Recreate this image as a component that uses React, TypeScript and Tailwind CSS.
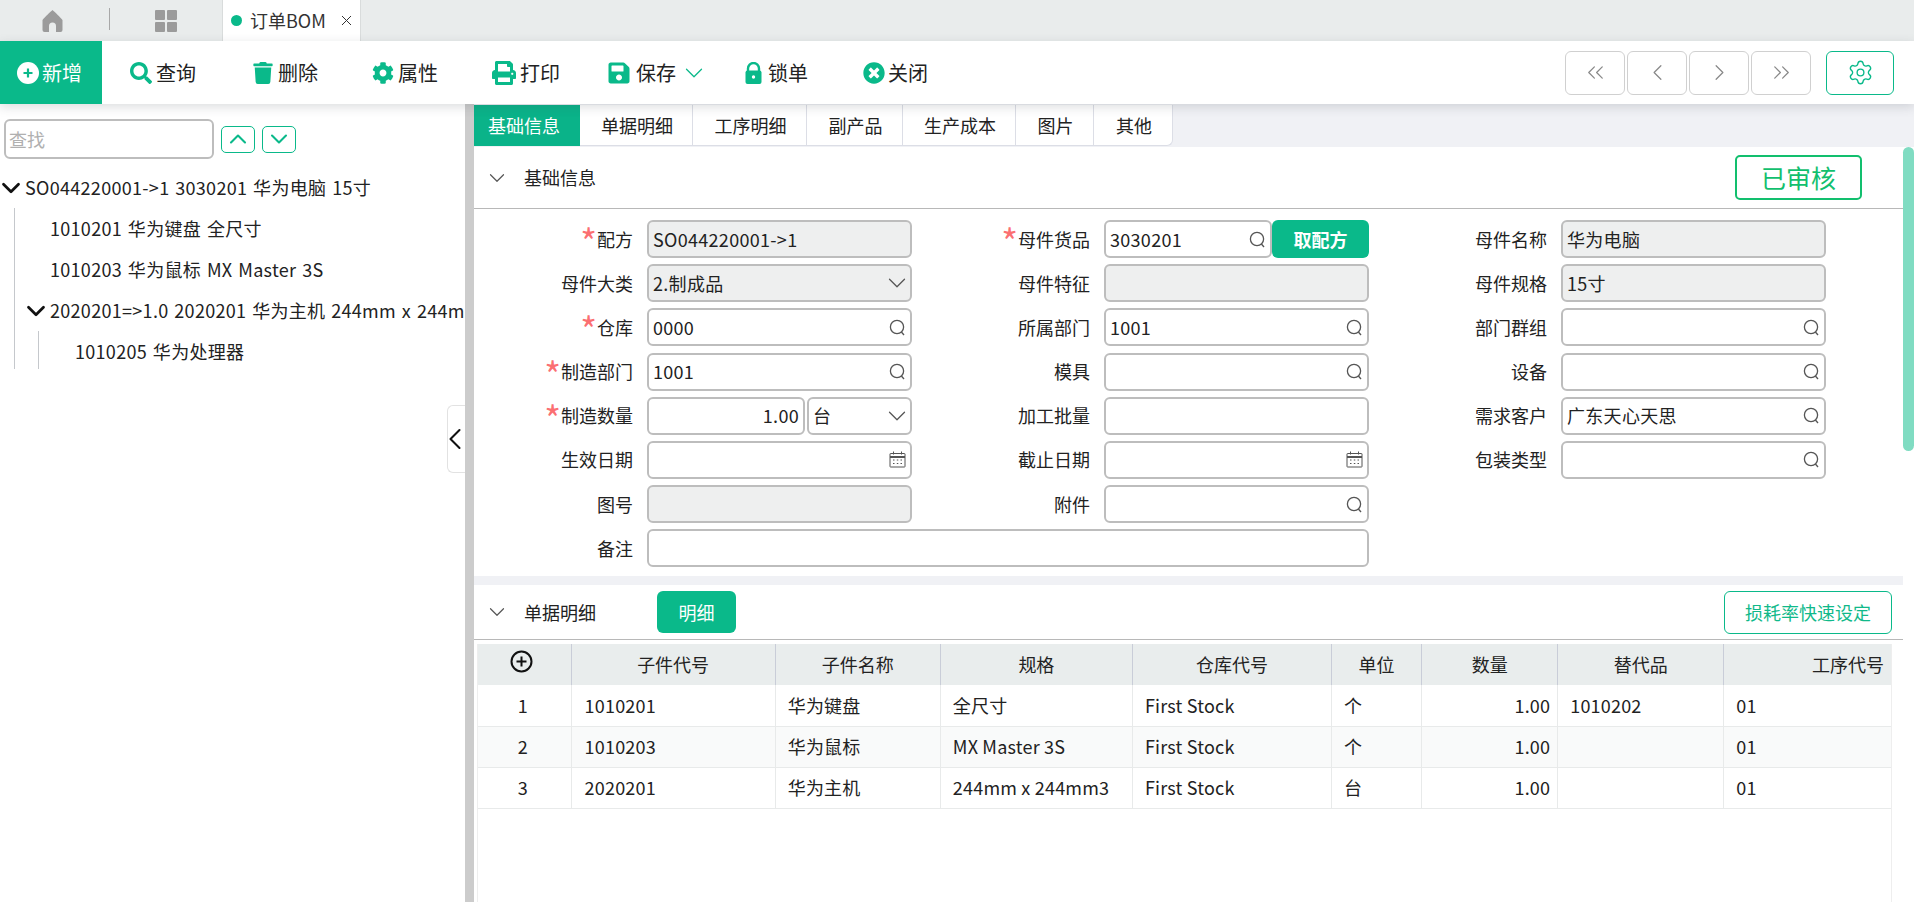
import { ChevronDown, ChevronLeft, ChevronRight, ChevronUp, ChevronsLeft, ChevronsRight, Settings } from "lucide-react";
import type { ReactNode } from "react";
import { FaCog, FaPrint, FaSave, FaSearch, FaTimesCircle, FaTrash } from "react-icons/fa";

const SearchGlyph = () => (
  <svg width="17" height="17" viewBox="0 0 17 17" fill="none" stroke="#555" strokeWidth="1.3" className="shrink-0">
    <circle cx="8" cy="8" r="6.6" />
    <path d="M12.4 13l2.6 3" />
  </svg>
);

const CalendarGlyph = () => (
  <svg width="17" height="17" viewBox="0 0 17 17" fill="none" stroke="#555" className="shrink-0">
    <rect x="1" y="2.5" width="15" height="13.5" rx="0.5" />
    <path d="M1 6h15" strokeWidth="2" />
    <path d="M4.5 0.5v3M12.5 0.5v3" />
    <path d="M4 9h1.5M7.8 9h1.5M11.5 9h1.5M4 12.5h1.5M7.8 12.5h1.5M11.5 12.5h1.5" />
  </svg>
);

const LockGlyph = () => (
  <svg width="17" height="22" viewBox="0 0 17 22" className="shrink-0">
    <path d="M3 9V6.5a5.5 5.500 0 0 1 11 0V9" fill="none" stroke="#0ab98a" strokeWidth="2.4" />
    <rect x="0.5" y="8.5" width="16" height="13.5" rx="2" fill="#0ab98a" />
    <circle cx="8.5" cy="15" r="1.7" fill="#fff" />
  </svg>
);

const toolItems: { label: string; icon: ReactNode; className: string }[] = [
  { label: "查询", icon: <FaSearch size={22} color="#0ab98a" />, className: "w-[122px] pl-[28px]" },
  { label: "删除", icon: <FaTrash size={22} color="#0ab98a" />, className: "w-[120px] pl-[28px]" },
  { label: "属性", icon: <FaCog size={22} color="#0ab98a" />, className: "w-[120px] pl-[28px]" },
  { label: "打印", icon: <FaPrint size={24} color="#0ab98a" />, className: "w-[143px] pl-[28px]" },
];

function ToolItem({ label, icon, className }: { label: string; icon: ReactNode; className: string }) {
  return (
    <div className={`flex h-full items-center gap-[4px] text-[20px] text-[#222] ${className}`}>
      {icon}
      <span>{label}</span>
    </div>
  );
}

function Input({
  value,
  icon,
  disabled,
  right,
  className = "w-[265px]",
}: {
  value?: string;
  icon?: ReactNode;
  disabled?: boolean;
  right?: boolean;
  className?: string;
}) {
  return (
    <div
      className={`flex h-[38px] items-center justify-between rounded-[6px] border-2 border-[#bdbdbd] px-[4px] text-[18px] tracking-[0.3px] text-[#222] ${
        disabled ? "bg-[#eeefef]" : "bg-white"
      } ${className}`}
    >
      <span className={right ? "flex-1 text-right" : ""}>{value}</span>
      {icon}
    </div>
  );
}

function Field({
  label,
  required,
  first,
  children,
}: {
  label: string;
  required?: boolean;
  first?: boolean;
  children: ReactNode;
}) {
  return (
    <div className="flex items-center">
      <div className={`flex h-[38px] shrink-0 items-center justify-end text-[18px] text-[#222] ${first ? "mr-[14px] w-[159px]" : "mr-[14px] w-[178px]"}`}>
        {required && <span className="h-[24px] text-[36px] leading-[26px] text-[#fb6f72]">*</span>}
        <span>{label}</span>
      </div>
      {children}
    </div>
  );
}

const search = <SearchGlyph />;
const calendar = <CalendarGlyph />;
const chevron = <ChevronDown size={30} color="#555" strokeWidth={1} className="-my-[4px] -mr-[6px] shrink-0" />;

const columns = [
  { title: "", width: "w-[93px]" },
  { title: "子件代号", width: "w-[204px]" },
  { title: "子件名称", width: "w-[165px]" },
  { title: "规格", width: "w-[192px]" },
  { title: "仓库代号", width: "w-[199px]" },
  { title: "单位", width: "w-[90px]" },
  { title: "数量", width: "w-[136px]" },
  { title: "替代品", width: "w-[166px]" },
  { title: "工序代号", width: "w-[167px]" },
];

const rows = [
  ["1", "1010201", "华为键盘", "全尺寸", "First Stock", "个", "1.00", "1010202", "01"],
  ["2", "1010203", "华为鼠标", "MX Master 3S", "First Stock", "个", "1.00", "", "01"],
  ["3", "2020201", "华为主机", "244mm x 244mm3", "First Stock", "台", "1.00", "", "01"],
];

const tabs = [
  { label: "单据明细", width: "w-[113px]" },
  { label: "工序明细", width: "w-[114px]" },
  { label: "副产品", width: "w-[96px]" },
  { label: "生产成本", width: "w-[113px]" },
  { label: "图片", width: "w-[78px]" },
  { label: "其他", width: "w-[78px]" },
];

export default function App() {
  return (
    <div className="flex h-[902px] w-[1914px] flex-col overflow-hidden bg-white font-['Noto_Sans_CJK_SC','Noto_Sans',sans-serif]">
      {/* top tabs */}
      <div className="flex h-[41px] shrink-0 bg-[#e9ecec]">
        <div className="flex w-[109px] items-center justify-end pr-[46px]">
          <svg width="21" height="22" viewBox="0 0 21 22">
            <path
              d="M10.5 0C8 2 3 7 0.5 10v10a2 2 0 0 0 2 2H7v-6a3.5 3.5 0 0 1 7 0v6h4.500a2 2 0 0 0 2-2V10C18 7 13 2 10.500 0z"
              fill="#9b9b9b"
            />
          </svg>
        </div>
        <div className="mt-[8px] h-[22px] w-px bg-[#a8a8a8]" />
        <div className="flex w-[112px] items-center pl-[45px]">
          <svg width="22" height="22" viewBox="0 0 22 22" fill="#9b9b9b">
            <rect width="10" height="10" rx="1" />
            <rect x="12" width="10" height="10" rx="1" />
            <rect y="12" width="10" height="10" rx="1" />
            <rect x="12" y="12" width="10" height="10" rx="1" />
          </svg>
        </div>
        <div className="flex w-[139px] items-center border-x border-[#d9dcdc] bg-white pl-[8px]">
          <span className="h-[11px] w-[11px] rounded-full bg-[#0ab98a]" />
          <span className="ml-[8px] text-[18px] text-[#333]">订单BOM</span>
          <svg width="11" height="11" viewBox="0 0 11 11" stroke="#333" className="ml-[15px]">
            <path d="M1 1l9 9M10 1l-9 9" />
          </svg>
        </div>
      </div>

      {/* toolbar */}
      <div className="relative z-10 flex h-[63px] shrink-0 items-center bg-white shadow-[0_3px_10px_rgba(60,64,80,0.18)]">
        <div className="flex h-full w-[102px] items-center gap-[3px] bg-[#0ab98a] pl-[17px] text-[20px] text-white">
          <svg width="22" height="22" viewBox="0 0 22 22" className="shrink-0">
            <circle cx="11" cy="11" r="11" fill="#fff" />
            <path d="M11 6.500v9M6.500 11h9" stroke="#0ab98a" strokeWidth="2.2" />
          </svg>
          <span>新增</span>
        </div>
        {toolItems.map((item) => (
          <ToolItem key={item.label} {...item} />
        ))}
        <div className="flex h-full w-[138px] items-center gap-[5px] text-[20px] text-[#222]">
          <FaSave size={24} color="#0ab98a" />
          <span>保存</span>
          <ChevronDown size={30} color="#0ab98a" strokeWidth={1} className="-ml-[2px]" />
        </div>
        <div className="flex h-full w-[118px] items-center gap-[6px] text-[20px] text-[#222]">
          <LockGlyph />
          <span>锁单</span>
        </div>
        <div className="flex h-full items-center gap-[3px] text-[20px] text-[#222]">
          <FaTimesCircle size={22} color="#0ab98a" />
          <span>关闭</span>
        </div>
        <div className="ml-auto mr-[20px] flex items-center">
          <div className="flex gap-[2px]">
            {[ChevronsLeft, ChevronLeft, ChevronRight, ChevronsRight].map((Icon, i) => (
              <div key={i} className="flex h-[44px] w-[60px] items-center justify-center rounded-[6px] border border-[#d0d0d0] bg-white">
                <Icon size={27} color="#888" strokeWidth={1.1} />
              </div>
            ))}
          </div>
          <div className="ml-[15px] flex h-[44px] w-[68px] items-center justify-center rounded-[6px] border border-[#0ab98a]">
            <Settings size={27} color="#0ab98a" strokeWidth={1.2} />
          </div>
        </div>
      </div>

      <div className="flex min-h-0 flex-1">
        {/* tree */}
        <div className="relative w-[465px] shrink-0 overflow-hidden bg-white">
          <div className="flex items-center pl-[4px] pt-[15px]">
            <div className="flex h-[40px] w-[210px] items-center rounded-[6px] border-2 border-[#bdbdbd] px-[3px] text-[18px] text-[#b0b0b0]">
              查找
            </div>
            <div className="ml-[7px] flex h-[27px] w-[34px] items-center justify-center rounded-[5px] border border-[#0ab98a]">
              <ChevronUp size={28} color="#0ab98a" strokeWidth={1.8} />
            </div>
            <div className="ml-[7px] flex h-[27px] w-[34px] items-center justify-center rounded-[5px] border border-[#0ab98a]">
              <ChevronDown size={28} color="#0ab98a" strokeWidth={1.8} />
            </div>
          </div>
          <div className="mt-[8px] text-[18px] tracking-[0.3px] text-[#222] [word-spacing:1.5px]">
            <div className="flex h-[41px] items-center whitespace-nowrap">
              <div className="flex w-[21px] shrink-0 justify-center">
                <ChevronDown size={30} color="#111" strokeWidth={2.2} className="shrink-0" />
              </div>
              <span className="ml-[4px]">SO044220001-&gt;1 3030201 华为电脑 15寸</span>
            </div>
            <div className="ml-[14px] border-l border-[#c5c8cc]">
              <div className="flex h-[41px] items-center pl-[35px]">1010201 华为键盘 全尺寸</div>
              <div className="flex h-[41px] items-center pl-[35px]">1010203 华为鼠标 MX Master 3S</div>
              <div className="flex h-[41px] items-center overflow-hidden whitespace-nowrap pl-[10px]">
                <div className="flex w-[21px] shrink-0 justify-center">
                  <ChevronDown size={30} color="#111" strokeWidth={2.2} className="shrink-0" />
                </div>
                <span className="ml-[4px]">2020201=&gt;1.0 2020201 华为主机 244mm x 244mm3</span>
              </div>
              <div className="ml-[23px] flex h-[38px] items-center border-l border-[#c5c8cc] pl-[36px] pt-[2px]">1010205 华为处理器</div>
            </div>
          </div>
          <div className="absolute right-0 top-[301px] flex h-[68px] w-[18px] items-center justify-center rounded-l-[6px] border border-r-0 border-[#e2e2e2] bg-white pr-[3px]">
            <ChevronLeft size={36} color="#111" strokeWidth={1.4} className="shrink-0" />
          </div>
        </div>
        <div className="w-[9px] shrink-0 bg-[#cccccc]" />

        {/* detail */}
        <div className="flex min-w-0 flex-1 flex-col bg-[#f0f1f5]">
          <div className="flex h-[43px] shrink-0 items-start pt-px">
            <div className="flex h-[41px] w-[106px] items-center justify-center bg-[#0ab389] pr-[6px] text-[18px] text-white">基础信息</div>
            <div className="flex h-[41px] rounded-br-[6px] border-b border-r border-[#dcdee6] bg-white text-[18px] text-[#222]">
              {tabs.map((tab) => (
                <div key={tab.label} className={`flex items-center justify-center border-r border-[#dcdee6] pl-[2px] last:border-r-0 ${tab.width}`}>
                  {tab.label}
                </div>
              ))}
            </div>
          </div>
          <div className="flex min-h-0 flex-1">
            <div className="flex min-w-0 flex-1 flex-col">
              <section className="h-[429px] shrink-0 bg-white">
                <div className="flex h-[62px] items-center border-b border-[#b8b8b8] pl-[10px] pr-[41px]">
                  <ChevronDown size={26} color="#555" strokeWidth={1.1} />
                  <span className="ml-[14px] text-[18px] text-[#222]">基础信息</span>
                  <div className="ml-auto flex h-[45px] w-[127px] items-center justify-center rounded-[5px] border-2 border-[#12bf6e] text-[25px] text-[#12bf6e]">
                    已审核
                  </div>
                </div>
                <div className="grid grid-cols-[438px_457px_457px] gap-y-[6.200px] pt-[11px]">
                  <Field label="配方" required first>
                    <Input value="SO044220001->1" disabled />
                  </Field>
                  <Field label="母件货品" required>
                    <Input value="3030201" icon={search} className="w-[168px]" />
                    <div className="flex h-[38px] w-[97px] items-center justify-center rounded-[6px] bg-[#0ab98a] text-[18px] font-bold text-white">取配方</div>
                  </Field>
                  <Field label="母件名称">
                    <Input value="华为电脑" disabled />
                  </Field>

                  <Field label="母件大类" first>
                    <Input value="2.制成品" disabled icon={chevron} />
                  </Field>
                  <Field label="母件特征">
                    <Input disabled />
                  </Field>
                  <Field label="母件规格">
                    <Input value="15寸" disabled />
                  </Field>

                  <Field label="仓库" required first>
                    <Input value="0000" icon={search} />
                  </Field>
                  <Field label="所属部门">
                    <Input value="1001" icon={search} />
                  </Field>
                  <Field label="部门群组">
                    <Input icon={search} />
                  </Field>

                  <Field label="制造部门" required first>
                    <Input value="1001" icon={search} />
                  </Field>
                  <Field label="模具">
                    <Input icon={search} />
                  </Field>
                  <Field label="设备">
                    <Input icon={search} />
                  </Field>

                  <Field label="制造数量" required first>
                    <Input value="1.00" right className="mr-[2px] w-[158px]" />
                    <Input value="台" icon={chevron} className="w-[105px]" />
                  </Field>
                  <Field label="加工批量">
                    <Input />
                  </Field>
                  <Field label="需求客户">
                    <Input value="广东天心天思" icon={search} />
                  </Field>

                  <Field label="生效日期" first>
                    <Input icon={calendar} />
                  </Field>
                  <Field label="截止日期">
                    <Input icon={calendar} />
                  </Field>
                  <Field label="包装类型">
                    <Input icon={search} />
                  </Field>

                  <Field label="图号" first>
                    <Input disabled />
                  </Field>
                  <Field label="附件">
                    <Input icon={search} />
                  </Field>
                  <div />

                  <div className="col-span-3">
                    <Field label="备注" first>
                      <Input className="w-[722px]" />
                    </Field>
                  </div>
                </div>
              </section>

              <section className="mt-[9px] flex min-h-0 flex-1 flex-col bg-white">
                <div className="flex h-[55px] shrink-0 items-center border-b border-[#b8b8b8] pl-[10px] pr-[11px]">
                  <ChevronDown size={26} color="#555" strokeWidth={1.1} />
                  <span className="ml-[14px] text-[18px] text-[#222]">单据明细</span>
                  <div className="ml-[61px] flex h-[42px] w-[79px] items-center justify-center rounded-[6px] bg-[#0ab98a] text-[18px] text-white">明细</div>
                  <div className="ml-auto flex h-[43px] w-[168px] items-center justify-center rounded-[6px] border border-[#0ab98a] text-[18px] text-[#10b98a]">
                    损耗率快速设定
                  </div>
                </div>
                <div className="ml-[3px] mr-[11px] mt-[4px] flex-1 border-x border-[#eeeeee]">
                  <table className="w-full table-fixed border-collapse text-[18px] text-[#222]">
                    <thead>
                      <tr className="h-[41px] bg-[#e9eded]">
                        {columns.map((col, i) => (
                          <th
                            key={i}
                            className={`border-l border-[#c9cdd8] font-normal first:border-l-0 first:pr-[5px] last:pr-[7px] last:text-right ${col.width}`}
                          >
                            {i === 0 ? (
                              <svg width="23" height="23" viewBox="0 0 23 23" fill="none" stroke="#111" strokeWidth="2" className="mx-auto mb-[6px]">
                                <circle cx="11.500" cy="11.500" r="10" />
                                <path d="M11.500 6.500v10M6.500 11.500h10" />
                              </svg>
                            ) : (
                              col.title
                            )}
                          </th>
                        ))}
                      </tr>
                    </thead>
                    <tbody className="tracking-[0.2px]">
                      {rows.map((row, r) => (
                        <tr key={r} className={`h-[41px] border-b border-[#e8eaea] ${r === 1 ? "bg-[#f9fafa]" : "bg-white"}`}>
                          {row.map((cell, i) => (
                            <td
                              key={i}
                              className={`border-l border-[#e8eaea] first:border-l-0 ${
                                i === 0 ? "pr-[3px] text-center" : i === 6 ? "pr-[7px] text-right" : i === 1 ? "pl-[13px]" : "pl-[12px]"
                              }`}
                            >
                              {cell}
                            </td>
                          ))}
                        </tr>
                      ))}
                    </tbody>
                  </table>
                </div>
              </section>
            </div>
            <div className="w-[11px] shrink-0 bg-white">
              <div className="h-[304px] w-full rounded-[6px] bg-[#80dcc2]" />
            </div>
          </div>
        </div>
      </div>
    </div>
  );
}
